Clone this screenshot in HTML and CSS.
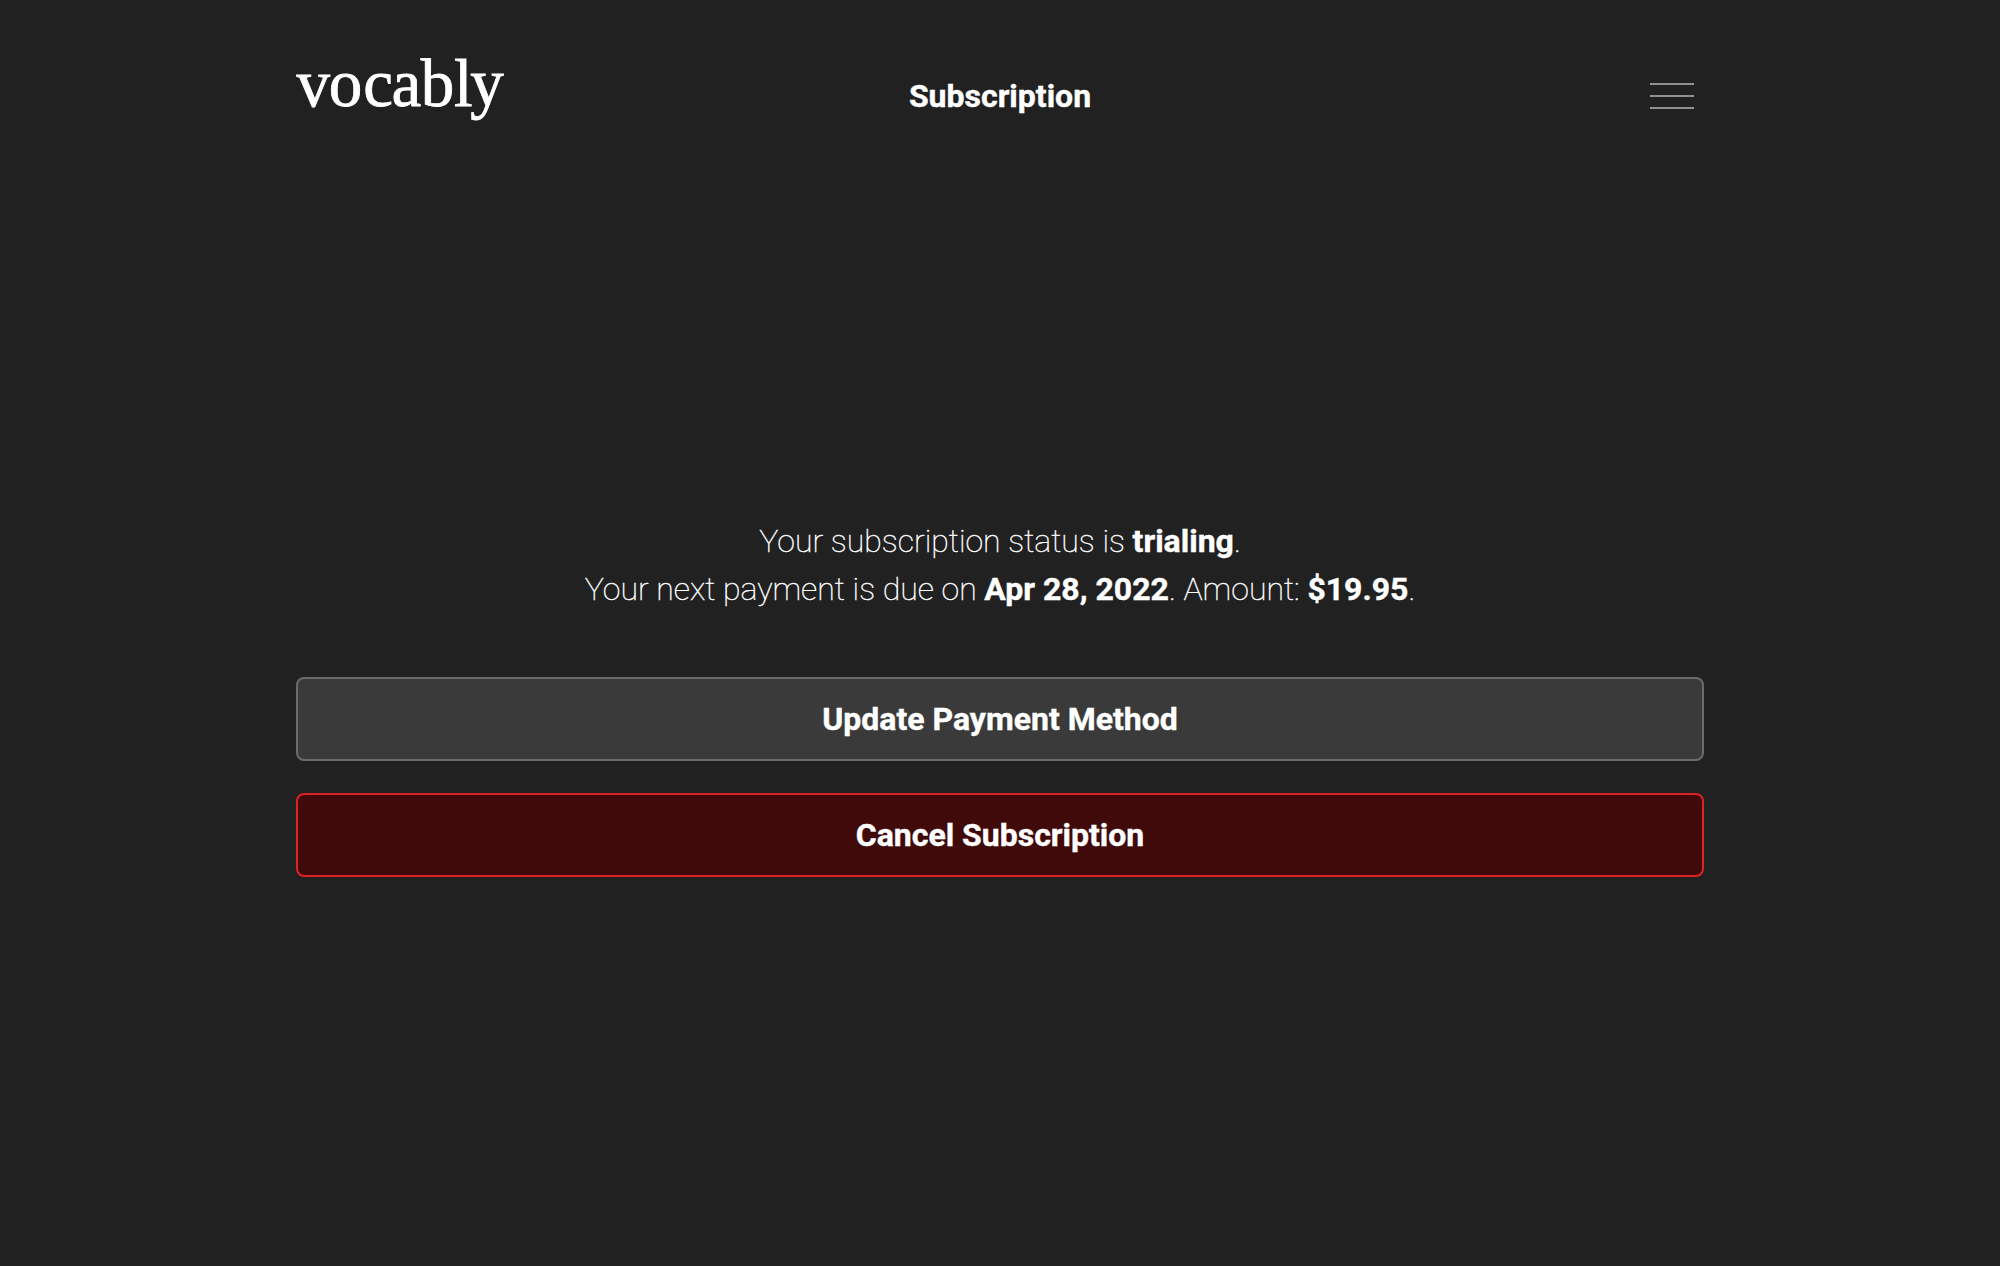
FILE: index.html
```html
<!DOCTYPE html>
<html lang="en">
<head>
<meta charset="utf-8">
<title>Vocably – Subscription</title>
<link rel="stylesheet" href="styles.css">
</head>
<body>
<header class="header">
  <a class="logo"><svg class="logo-art" width="220" height="92" viewBox="0 0 220 92"><text class="logo-text" x="0.5 32.7 67.3 95.5 124.7 158 174.3" y="56">vocably</text></svg></a>
  <h1 class="title">Subscription</h1>
  <button class="menu" aria-label="Menu"><span class="bar"></span><span class="bar"></span><span class="bar"></span></button>
</header>
<main class="main">
  <p class="status"><span class="line">Your subscription status is <strong>trialing</strong>.</span><span class="line">Your next payment is due on <strong>Apr 28, 2022</strong>. Amount: <strong>$19.95</strong>.</span></p>
  <button class="button">Update Payment Method</button>
  <button class="button button-danger">Cancel Subscription</button>
</main>
</body>
</html>
```

FILE: styles.css
```css
* { box-sizing: border-box; }
body {
  margin: 0;
  height: 1266px;
  padding: 0 296px;
  background: #212121;
  color: #fff;
  font: 100 32px/48px Roboto, sans-serif;
  -webkit-text-stroke: 0.4px currentColor;
  display: flex;
  flex-direction: column;
}
.header {
  height: 192px;
  display: grid;
  grid-template-columns: 1fr auto 1fr;
  align-items: center;
}
.logo { display: flex; }
.logo-art { overflow: visible; }
.logo-text { font: 400 67px "Liberation Serif", serif; fill: #fff; stroke: #fff; stroke-width: 0.8px; }
.title { margin: 0; font-size: 32px; font-weight: 700; }
.menu {
  justify-self: end;
  width: 44px;
  margin-right: 10px;
  padding: 0;
  border: 0;
  background: none;
  display: flex;
  flex-direction: column;
  gap: 10px;
}
.bar { height: 2px; background: #909090; }
.main { display: flex; flex-direction: column; padding-top: 325px; }
.status { margin: 0 0 64px; text-align: center; }
.line { display: block; }
strong { font-weight: 700; }
.button {
  height: 84px;
  margin-bottom: 32px;
  border: 2px solid #6b6b6b;
  border-radius: 8px;
  background: #3a3a3a;
  color: #fff;
  font: 700 32px/48px Roboto, sans-serif;
}
.button-danger { border-color: #dc2323; background: #400a0b; }
```
